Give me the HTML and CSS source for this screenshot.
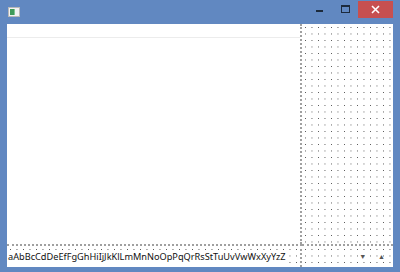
FILE: index.html
```html
<!DOCTYPE html>
<html lang="en">
<head>
    <meta charset="UTF-8">
    <title>Form1</title>
    <link rel="stylesheet" href="styles.css">
</head>
<body>
<div class="window">
    <div class="titlebar">
        <svg class="app-icon" width="12" height="10" viewBox="0 0 12 10">
            <rect x="0.5" y="0.5" width="11" height="9" fill="#f2f2f2" stroke="#b8b8b8"/>
            <rect x="2" y="2" width="4" height="6" fill="#3f9a5a"/>
            <rect x="6" y="2" width="1" height="6" fill="#7fc490"/>
        </svg>
        <div class="caption-buttons">
            <div class="btn btn-min"><svg width="9" height="9" viewBox="0 0 9 9"><rect x="1" y="5" width="7" height="2" fill="#1c2a3c"/></svg></div>
            <div class="btn btn-max"><svg width="9" height="9" viewBox="0 0 9 9"><rect x="0.5" y="0.5" width="8" height="7" fill="none" stroke="#1c2a3c"/><rect x="0" y="0" width="9" height="2" fill="#1c2a3c"/></svg></div>
            <div class="btn btn-close"><svg width="9" height="9" viewBox="0 0 9 9"><path d="M1 1 L8 8 M8 1 L1 8" stroke="#fff" stroke-width="1.6"/></svg></div>
        </div>
    </div>
    <div class="client">
        <div class="main">
            <div class="header"></div>
        </div>
        <div class="grid-panel"></div>
        <div class="text-row">
            <span class="sample">aAbBcCdDeEfFgGhHiIjJkKlLmMnNoOpPqQrRsStTuUvVwWxXyYzZ</span>
        </div>
        <div class="spin-row">
            <span class="arrow">&#9660;</span>
            <span class="arrow">&#9650;</span>
        </div>
    </div>
</div>
</body>
</html>
```
FILE: styles.css
```css
body{
    margin:0;
    font-family:"Noto Sans","Liberation Sans",sans-serif;
}
.window{
    width:400px;
    height:272px;
    background-color:#6188c1;
    display:flex;
    flex-direction:column;
    box-sizing:border-box;
}
.titlebar{
    height:24px;
    display:flex;
    align-items:flex-start;
    padding-left:8px;
    padding-right:7px;
}
.app-icon{
    margin-top:7px;
}
.caption-buttons{
    margin-left:auto;
    display:flex;
    align-items:flex-start;
}
.btn{
    height:19px;
    display:flex;
    align-items:center;
    justify-content:center;
}
.btn-min{
    width:27px;
}
.btn-max{
    width:25px;
}
.btn-close{
    width:35px;
    margin-top:1px;
    height:17px;
    background-color:#c75050;
}
.client{
    flex:1;
    margin:0 7px 5px 7px;
    background-color:#fff;
    display:grid;
    grid-template-columns:295px 1fr;
    grid-template-rows:220px 1fr;
}
.main{
    border-right:2px dotted #a0a0a0;
}
.header{
    height:13px;
    border-bottom:1px solid #ececec;
}
/* dot grid: white bands hide the vertical lines except one row per tile */
.grid-panel,.spin-row,.text-row{
    background-color:#fff;
    background-image:
        linear-gradient(to bottom,transparent 1px,#fff 1px),
        linear-gradient(to right,#505050 1px,transparent 1px);
    background-size:6.5px 6.5px;
    background-position:3px 3px;
}
.text-row{
    border-top:2px dotted #a0a0a0;
    border-right:2px dotted #a0a0a0;
    font-size:9.2px;
    color:#111;
    padding-left:1px;
    display:flex;
    align-items:center;
    overflow:hidden;
    white-space:nowrap;
}
.sample{
    background-color:#fff;
}
.spin-row{
    border-top:2px dotted #a0a0a0;
    display:flex;
    justify-content:flex-end;
    align-items:center;
    gap:12px;
    padding-right:8px;
}
.arrow{
    font-size:7px;
    color:#555;
}
```
